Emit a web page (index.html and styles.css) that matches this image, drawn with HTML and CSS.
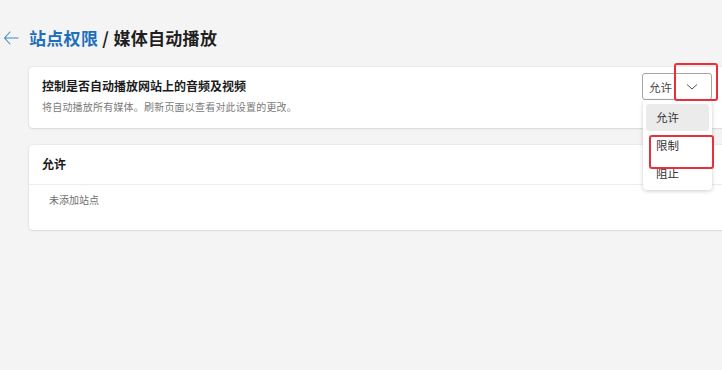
FILE: index.html
```html
<!DOCTYPE html>
<html lang="zh-CN">
<head>
<meta charset="utf-8">
<link rel="stylesheet" href="styles.css">
</head>
<body>
<div class="page">
  <header class="header">
    <svg class="back" width="16" height="14" viewBox="0 0 16 14"><path d="M7 1 L1.5 7 L7 13 M1.5 7 H15" fill="none" stroke="#3d86c6" stroke-width="1.1" stroke-linecap="round" stroke-linejoin="round"/></svg>
    <h1 class="title"><span class="crumb">站点权限</span> / 媒体自动播放</h1>
  </header>
  <main class="content">
    <section class="card setting">
      <div class="setting-text">
        <div class="setting-title">控制是否自动播放网站上的音频及视频</div>
        <div class="setting-desc">将自动播放所有媒体。刷新页面以查看对此设置的更改。</div>
      </div>
      <div class="select-wrap">
        <div class="select">
          <span>允许</span>
          <svg width="12" height="8" viewBox="0 0 12 8"><path d="M1 1.5 L6 6 L11 1.5" fill="none" stroke="#555" stroke-width="1"/></svg>
        </div>
        <div class="annot annot-select"></div>
        <ul class="menu">
          <li class="item active">允许</li>
          <li class="item">限制</li>
          <li class="item">阻止</li>
        </ul>
        <div class="annot annot-item"></div>
      </div>
    </section>
    <section class="card list">
      <div class="list-head">允许</div>
      <div class="list-empty">未添加站点</div>
    </section>
  </main>
</div>
</body>
</html>
```
FILE: styles.css
```css
html, body {
  margin: 0;
  padding: 0;
  background: #f4f4f4;
  overflow: hidden;
  width: 722px;
  height: 370px;
  font-family: "Noto Sans CJK SC", "Noto Sans", sans-serif;
  color: #1b1b1b;
}
.page {
  width: 722px;
  height: 370px;
}
.header {
  display: flex;
  align-items: center;
  height: 24px;
  padding: 26px 0 0 3px;
}
.back {
  display: block;
  margin-right: 10px;
}
.title {
  margin: 0;
  font-size: 17px;
  font-weight: 700;
  line-height: 24px;
  color: #1f1f1f;
  letter-spacing: 0.3px;
  white-space: pre;
}
.crumb {
  color: #1e6fba;
}
.content {
  padding: 17px 0 0 29px;
  display: flex;
  flex-direction: column;
  gap: 17px;
}
.card {
  background: #fff;
  border-radius: 4px;
  box-shadow: 0 0 2px rgba(0,0,0,0.12), 0 1px 2px rgba(0,0,0,0.08);
  width: 720px;
}
.setting {
  display: flex;
  justify-content: space-between;
  align-items: flex-start;
  height: 61px;
  box-sizing: border-box;
  padding: 11px 0 0 13px;
}
.setting-title {
  font-size: 12px;
  font-weight: 600;
  line-height: 16px;
  color: #1b1b1b;
}
.setting-desc {
  font-size: 10px;
  letter-spacing: 0.2px;
  line-height: 14px;
  margin-top: 6px;
  color: #7a7a7a;
}
.select-wrap {
  position: relative;
  margin-right: 37px;
  margin-top: -5px;
}
.select {
  width: 70px;
  height: 27px;
  box-sizing: border-box;
  border: 1px solid #a5a5a5;
  border-radius: 3px;
  display: flex;
  align-items: center;
  justify-content: space-between;
  padding: 0 13px 0 6px;
  font-size: 11.5px;
  color: #444;
  background: #fff;
}
.menu {
  position: absolute;
  left: 1px;
  top: 27px;
  width: 69px;
  margin: 0;
  padding: 4px 3px 2px;
  box-sizing: border-box;
  list-style: none;
  background: #fff;
  border-radius: 4px;
  box-shadow: 0 1px 4px rgba(0,0,0,0.2);
  z-index: 2;
}
.item {
  height: 27px;
  line-height: 26px;
  padding-left: 10px;
  font-size: 11.5px;
  color: #333;
  border-radius: 3px;
  margin-bottom: 1px;
}
.item.active {
  background: #ebebeb;
}
.annot {
  position: absolute;
  border: 2px solid #e8303a;
  border-radius: 3px;
  box-sizing: border-box;
  z-index: 3;
}
.annot-select {
  left: 32px;
  top: -10px;
  width: 44px;
  height: 38px;
}
.annot-item {
  left: 7px;
  top: 62px;
  width: 65px;
  height: 34px;
}
.list {
  height: 85px;
}
.list-head {
  height: 40px;
  box-sizing: border-box;
  padding: 11px 0 0 13px;
  font-size: 12px;
  font-weight: 600;
  line-height: 16px;
  border-bottom: 1px solid #ececec;
}
.list-empty {
  padding: 8px 0 0 20px;
  font-size: 10px;
  line-height: 14px;
  color: #6e6e6e;
}
```
